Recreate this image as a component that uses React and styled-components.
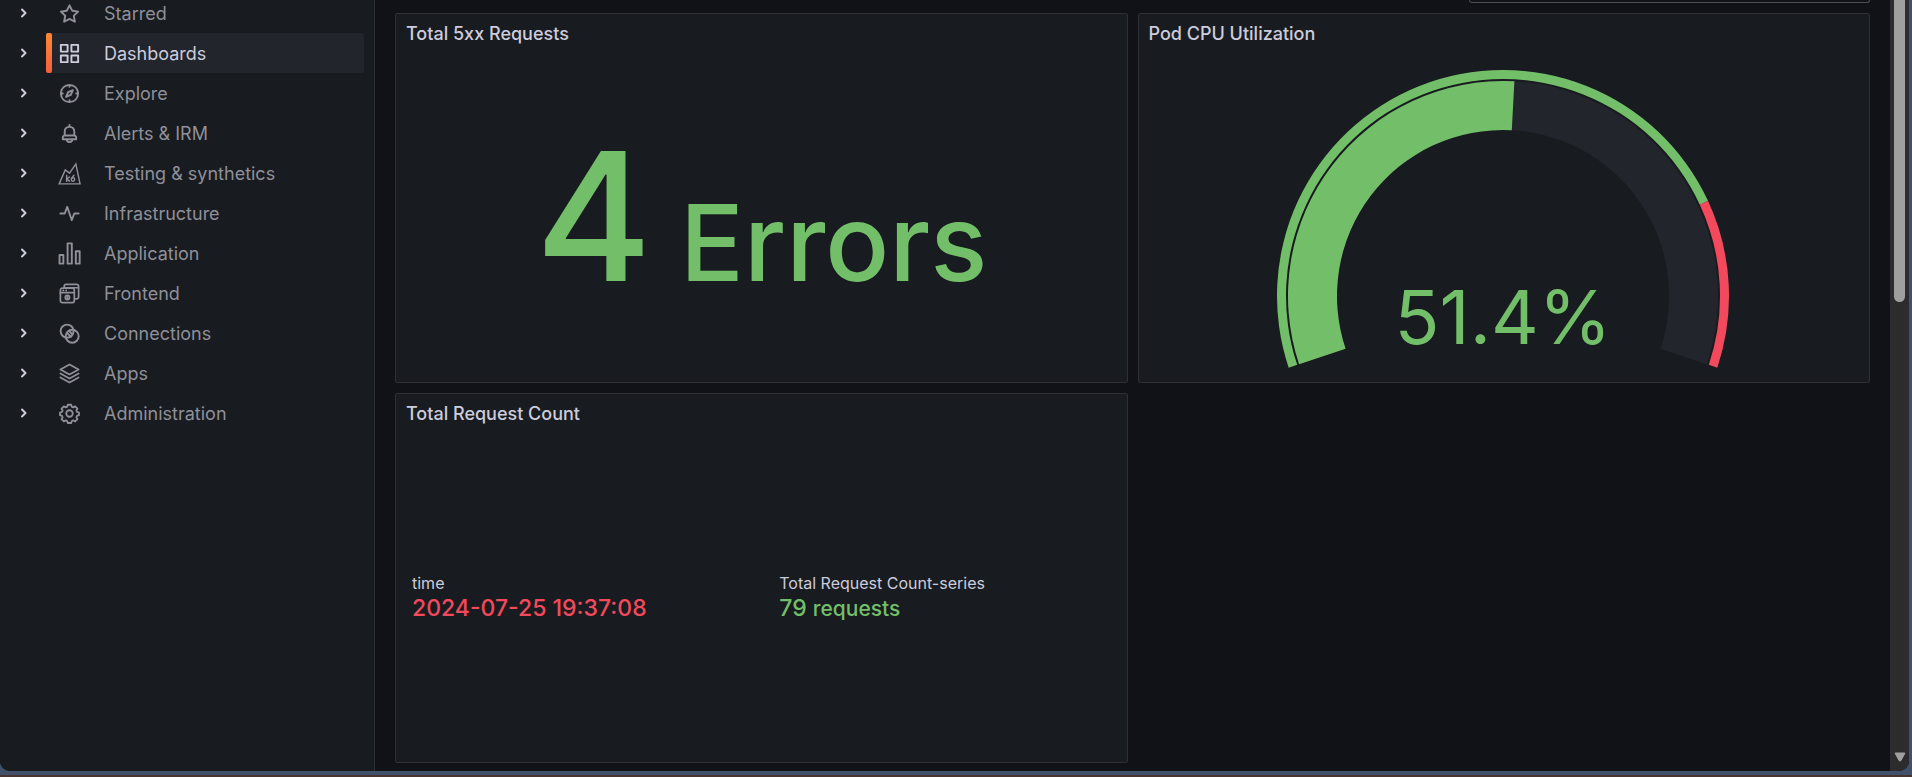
import React from "react";
import styled, { createGlobalStyle } from "styled-components";

const GREEN = "#73bf69";
const RED = "#f2495c";
const TRACK = "#22252b";

const Global = createGlobalStyle`
  * { box-sizing: border-box; }
  html, body, #root { height: 100%; }
  body {
    margin: 0;
    overflow: hidden;
    background: #41516a;
    color: #ccccdc;
    font-family: Inter, "Liberation Sans", sans-serif;
    font-size: 18px;
    line-height: 28px;
  }
`;

const Desktop = styled.div`
  height: 100vh;
  display: flex;
  padding: 0 3px 4px 0;
  border-bottom: 2px solid #47332f;
`;

const Window = styled.div`
  flex: 1;
  min-width: 0;
  display: flex;
  overflow: hidden;
  border-radius: 0 0 10px 10px;
  background: #111217;
`;

const Sidebar = styled.nav`
  flex: 0 0 375px;
  background: #181b1f;
  border-right: 1px solid #2e3035;
  overflow: hidden;
`;

const NavList = styled.ul`
  list-style: none;
  margin: -7px 0 0;
  padding: 0 10px 0 9px;
`;

const NavRow = styled.li`
  display: flex;
  height: 40px;
`;

const Expand = styled.button`
  flex: 0 0 30px;
  margin-right: 7px;
  padding: 0;
  border: 0;
  background: none;
  color: #ccccdc;
  display: grid;
  place-items: center;
`;

const NavLink = styled.a`
  flex: 1;
  display: flex;
  align-items: center;
  gap: 23px;
  padding: 1px 0 0 12px;
  border-radius: 2px;
  text-decoration: none;
  color: ${(p) => (p.$active ? "#ccccdc" : "#8f9099")};
  background: ${(p) => (p.$active ? TRACK : "none")};
  position: relative;

  &::before {
    content: "";
    display: ${(p) => (p.$active ? "block" : "none")};
    position: absolute;
    left: 0;
    top: 0;
    bottom: 0;
    width: 6px;
    border-radius: 2px;
    background: linear-gradient(#ff8833, #f55f3e);
  }
`;

const IconBox = styled.svg`
  width: 23px;
  height: 23px;
  flex: none;
  overflow: visible;
`;

const Main = styled.main`
  flex: 1;
  min-width: 0;
  padding: 0 20px 0 20px;
  display: flex;
  flex-direction: column;
`;

const TimePicker = styled.div`
  align-self: flex-end;
  width: 401px;
  height: 3px;
  border: 1px solid #4b4c54;
  border-top: 0;
  border-radius: 0 0 3px 3px;
`;

const Grid = styled.div`
  margin-top: 10px;
  display: grid;
  grid-template-columns: 1fr 1fr;
  grid-auto-rows: 370px;
  gap: 10px;
`;

const Panel = styled.section`
  min-width: 0;
  display: flex;
  flex-direction: column;
  background: #181b1f;
  border: 1px solid #2e3035;
  border-radius: 2px;
`;

const PanelTitle = styled.h2`
  margin: 0;
  padding: 6px 10px;
  font-size: 18px;
  line-height: 28px;
  font-weight: 500;
`;

const BigStat = styled.div`
  flex: 1;
  display: flex;
  justify-content: center;
  align-items: baseline;
  gap: 28px;
  padding-top: 74px;
  color: ${GREEN};
  font-weight: 500;
  line-height: 1;
`;

const StatNumber = styled.span`
  font-size: 178px;
`;

const StatUnit = styled.span`
  font-size: 106px;
`;

const GaugeArea = styled.div`
  flex: 1;
  display: flex;
  justify-content: center;
  padding-top: 15px;
`;

const GaugeSvg = styled.svg`
  width: 454px;
  height: 300px;
`;

const GaugeText = styled.text`
  font-family: Inter, "Liberation Sans", sans-serif;
  font-size: 74px;
  fill: ${GREEN};
`;

const Stats = styled.dl`
  flex: 1;
  margin: 0 0 4px;
  padding: 0 0 0 16px;
  display: grid;
  grid-template-columns: 1fr 1fr;
  column-gap: 20px;
  align-items: center;
`;

const StatLabel = styled.dt`
  font-size: 16px;
  line-height: 24px;
`;

const StatValue = styled.dd`
  margin: 0;
  font-size: 23px;
  line-height: 26px;
  font-weight: 500;
  color: ${(p) => p.$color};
`;

const Suffix = styled.span`
  font-size: 21px;
`;

const ScrollBar = styled.div`
  flex: 0 0 19px;
  background: #2c2c2c;
  display: flex;
  flex-direction: column;
  justify-content: space-between;
  align-items: center;
`;

const Thumb = styled.div`
  width: 11px;
  height: 302px;
  border-radius: 0 0 6px 6px;
  background: #9f9f9f;
`;

const ArrowDown = styled.svg`
  width: 12px;
  height: 10px;
  margin-bottom: 9px;
`;

const stroke = { fill: "none", stroke: "currentColor", strokeWidth: 2, strokeLinecap: "round", strokeLinejoin: "round" };

const icons = {
  star: <path fill="currentColor" d="M22,9.67A1,1,0,0,0,21.14,9l-5.69-.83L12.9,3a1,1,0,0,0-1.8,0L8.55,8.16,2.86,9a1,1,0,0,0-.81.68,1,1,0,0,0,.25,1l4.13,4-1,5.68A1,1,0,0,0,6.9,21.44L12,18.77l5.1,2.67a.93.93,0,0,0,.46.12,1,1,0,0,0,.59-.19,1,1,0,0,0,.4-1l-1-5.68,4.13-4A1,1,0,0,0,22,9.67Zm-6.15,4a1,1,0,0,0-.29.88l.72,4.2-3.76-2a1.06,1.06,0,0,0-.94,0l-3.76,2,.72-4.2a1,1,0,0,0-.29-.88l-3-3,4.21-.61a1,1,0,0,0,.76-.55L12,5.7l1.88,3.82a1,1,0,0,0,.76.55l4.21.61Z" />,
  apps: <path fill="currentColor" d="M10,13H3a1,1,0,0,0-1,1v7a1,1,0,0,0,1,1h7a1,1,0,0,0,1-1V14A1,1,0,0,0,10,13ZM9,20H4V15H9ZM21,2H14a1,1,0,0,0-1,1v7a1,1,0,0,0,1,1h7a1,1,0,0,0,1-1V3A1,1,0,0,0,21,2ZM20,9H15V4h5Zm1,4H14a1,1,0,0,0-1,1v7a1,1,0,0,0,1,1h7a1,1,0,0,0,1-1V14A1,1,0,0,0,21,13Zm-1,7H15V15h5ZM10,2H3A1,1,0,0,0,2,3v7a1,1,0,0,0,1,1h7a1,1,0,0,0,1-1V3A1,1,0,0,0,10,2ZM9,9H4V4H9Z" />,
  compass: <path fill="currentColor" d="M12,2A10,10,0,1,0,22,12,10,10,0,0,0,12,2Zm1,17.93V19a1,1,0,0,0-2,0v.93A8,8,0,0,1,4.07,13H5a1,1,0,0,0,0-2H4.07A8,8,0,0,1,11,4.07V5a1,1,0,0,0,2,0V4.07A8,8,0,0,1,19.93,11H19a1,1,0,0,0,0,2h.93A8,8,0,0,1,13,19.93ZM15.14,7.55l-5,2.12a1,1,0,0,0-.52.52l-2.12,5a1,1,0,0,0,.21,1.1,1,1,0,0,0,.7.29.93.93,0,0,0,.4-.08l5-2.12a1,1,0,0,0,.52-.52l2.12-5a1,1,0,0,0-1.31-1.31Zm-2.49,5.1-2.28,1,1-2.28,2.28-1Z" />,
  bell: <path fill="currentColor" d="M18,13.18V10a6,6,0,0,0-5-5.91V3a1,1,0,0,0-2,0V4.09A6,6,0,0,0,6,10v3.18A3,3,0,0,0,4,16v2a1,1,0,0,0,1,1H8.14a4,4,0,0,0,7.72,0H19a1,1,0,0,0,1-1V16A3,3,0,0,0,18,13.18ZM8,10a4,4,0,0,1,8,0v3H8Zm4,10a2,2,0,0,1-1.72-1h3.44A2,2,0,0,1,12,20Zm6-3H6V16a1,1,0,0,1,1-1H17a1,1,0,0,1,1,1Z" />,
  k6: (
    <g {...stroke} strokeWidth="1.5" strokeLinejoin="miter">
      <path d="M1.2 22.8 7.6 8.2l4.4 3.4L18.6 2l4.4 20.8Z" />
      <path d="M9 14v6M12 15.6l-2.8 2.2L12 20M16.6 13.8l-2 2.8" />
      <circle cx="15.6" cy="18.2" r="1.8" />
    </g>
  ),
  pulse: <path {...stroke} d="M2.5 12H7L9.6 5l4.800 14 2.600-7h4.500" />,
  bars: <path {...stroke} d="M1.600 13.600h4v9h-4zM10 1.400h4.400v21.200H10zM18.600 9.600h4v13h-4z" />,
  frontend: (
    <g {...stroke} strokeWidth="1.800">
      <rect x="2.500" y="6.500" width="14.500" height="15" rx="2" />
      <path d="M2.500 11h14.500M6.500 5.600V4.400A2 2 0 0 1 8.500 2.500H19.500A2 2 0 0 1 21.500 4.400V15.500A2 2 0 0 1 19.500 17.500H18M8 6h13M5.500 8.800h.1M8.500 8.800h.1" />
      <circle cx="9.800" cy="16.200" r="2.200" />
      <path d="M9.800 15.200v2" />
    </g>
  ),
  connections: (
    <g {...stroke}>
      <circle cx="9.500" cy="9.500" r="6.800" />
      <circle cx="14.800" cy="14.800" r="6.800" />
      <path d="M9.400 11.400l4 4M11.600 9.400l3.400 3.400" />
    </g>
  ),
  layers: <path {...stroke} strokeWidth="1.800" d="M12 2.500 21.500 7.800 12 13 2.500 7.800ZM2.500 12 12 17.300l9.500-5.300M2.500 16.200 12 21.500l9.500-5.300" />,
  gear: (
    <g {...stroke} strokeWidth="1.900">
      <circle cx="12" cy="12" r="3.400" />
      <path d="M10.200 2.900h3.600l.6 2.100 1.500.6 2-1.100 2.400 2.400-1.100 2 .6 1.500 2.100.6v2.800l-2.100.6-.6 1.500 1.100 2-2.400 2.400-2-1.100-1.500.6-.6 2.100h-3.600l-.6-2.100-1.500-.6-2 1.100-2.400-2.400 1.100-2-.6-1.500-2.100-.6v-2.800l2.100-.6.6-1.500-1.100-2 2.400-2.400 2 1.100 1.500-.6Z" />
    </g>
  ),
};

const NAV = [
  ["Starred", "star"],
  ["Dashboards", "apps"],
  ["Explore", "compass"],
  ["Alerts & IRM", "bell"],
  ["Testing & synthetics", "k6"],
  ["Infrastructure", "pulse"],
  ["Application", "bars"],
  ["Frontend", "frontend"],
  ["Connections", "connections"],
  ["Apps", "layers"],
  ["Administration", "gear"],
];

const CX = 226;
const CY = 227;
const SWEEP = 217;

function ring(from, to, outer, inner) {
  const point = (fraction, r) => {
    const a = ((-SWEEP / 2 + SWEEP * fraction) * Math.PI) / 180;
    return `${CX + r * Math.sin(a)} ${CY - r * Math.cos(a)}`;
  };
  const large = (to - from) * SWEEP > 180 ? 1 : 0;
  return `M${point(from, outer)}A${outer} ${outer} 0 ${large} 1 ${point(to, outer)}L${point(to, inner)}A${inner} ${inner} 0 ${large} 0 ${point(from, inner)}Z`;
}

function Gauge({ value, threshold }) {
  return (
    <GaugeSvg viewBox="0 0 454 300" role="img" aria-label={`${value}%`}>
      <path d={ring(0, threshold, 226, 217)} fill={GREEN} />
      <path d={ring(threshold, 1, 226, 217)} fill={RED} />
      <path d={ring(0, 1, 215, 166)} fill={TRACK} />
      <path d={ring(0, value / 100, 215, 166)} fill={GREEN} />
      <GaugeText x={CX} y="275" textAnchor="middle">{value}%</GaugeText>
    </GaugeSvg>
  );
}

export default function App() {
  return (
    <Desktop>
      <Global />
      <Window>
        <Sidebar aria-label="Main">
          <NavList>
            {NAV.map(([label, icon]) => (
              <NavRow key={label}>
                <Expand aria-label={`Expand ${label}`}>
                  <svg width="10" height="10" viewBox="0 0 10 10" fill="none" stroke="currentColor" strokeWidth="2" strokeLinecap="round" strokeLinejoin="round">
                    <path d="M3 1.500 6.500 5 3 8.500" />
                  </svg>
                </Expand>
                <NavLink href="#" $active={label === "Dashboards"}>
                  <IconBox viewBox="0 0 24 24" aria-hidden="true">{icons[icon]}</IconBox>
                  {label}
                </NavLink>
              </NavRow>
            ))}
          </NavList>
        </Sidebar>
        <Main>
          <TimePicker />
          <Grid>
            <Panel>
              <PanelTitle>Total 5xx Requests</PanelTitle>
              <BigStat>
                <StatNumber>4</StatNumber>
                <StatUnit>Errors</StatUnit>
              </BigStat>
            </Panel>
            <Panel>
              <PanelTitle>Pod CPU Utilization</PanelTitle>
              <GaugeArea>
                <Gauge value={51.4} threshold={0.8} />
              </GaugeArea>
            </Panel>
            <Panel>
              <PanelTitle>Total Request Count</PanelTitle>
              <Stats>
                <div>
                  <StatLabel>time</StatLabel>
                  <StatValue $color={RED}>2024-07-25 19:37:08</StatValue>
                </div>
                <div>
                  <StatLabel>Total Request Count-series</StatLabel>
                  <StatValue $color={GREEN}>79 <Suffix>requests</Suffix></StatValue>
                </div>
              </Stats>
            </Panel>
          </Grid>
        </Main>
        <ScrollBar>
          <Thumb />
          <ArrowDown viewBox="0 0 12 10" aria-hidden="true">
            <path d="M1 1h10L7 8.500q-1 1-2 0Z" fill="#9f9f9f" stroke="#9f9f9f" strokeLinejoin="round" />
          </ArrowDown>
        </ScrollBar>
      </Window>
    </Desktop>
  );
}
